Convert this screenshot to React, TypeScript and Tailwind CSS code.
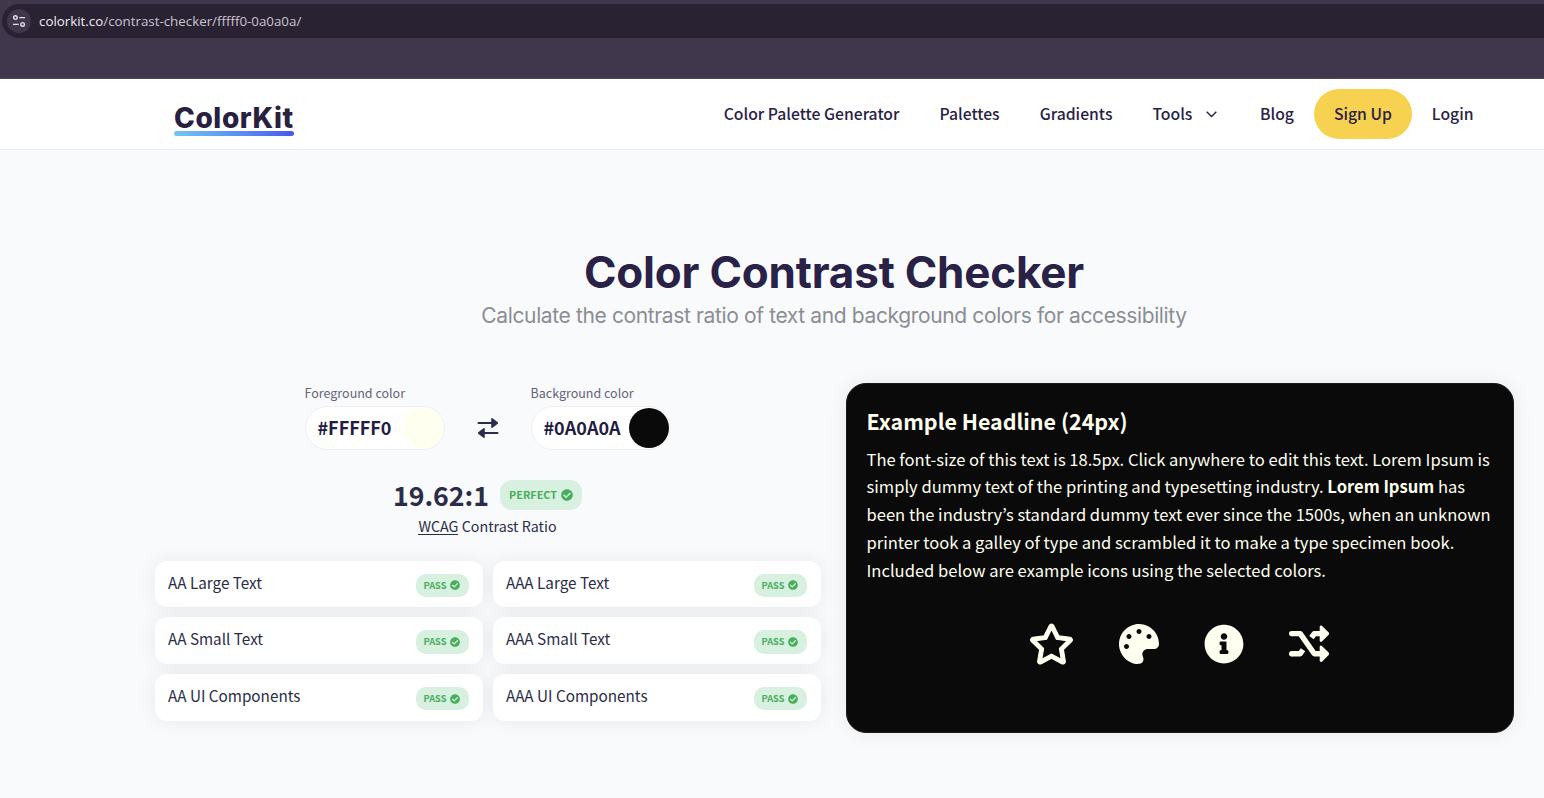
import type { ReactNode } from 'react';
import { FaCheckCircle, FaInfoCircle, FaPalette, FaRegStar } from 'react-icons/fa';

const levels = [
  'AA Large Text',
  'AAA Large Text',
  'AA Small Text',
  'AAA Small Text',
  'AA UI Components',
  'AAA UI Components',
];

function AddressBar() {
  return (
    <div className="h-[79px] bg-[#40374d] pt-1 pl-[2px] border-b border-[#4b4653]">
      <div className="flex h-[34px] items-center rounded-l-full bg-[#292233] pl-[5px]">
        <span className="flex size-6 items-center justify-center rounded-full bg-[#40374d]">
          <svg width="14" height="14" viewBox="0 0 14 14" fill="none" stroke="#e4deea" strokeWidth="1.4">
            <circle cx="3.4" cy="3.6" r="1.8" />
            <path d="M7.3 3.6H13M1 10.4h5.7" />
            <circle cx="10.6" cy="10.4" r="1.8" />
          </svg>
        </span>
        <span className="ml-2 font-['Open_Sans',sans-serif] text-[13.33px] leading-5 text-[#c9c3d0]">
          <span className="text-[#f0ecf4]">colorkit.co</span>/contrast-checker/fffff0-0a0a0a/
        </span>
      </div>
    </div>
  );
}

function NavLink({ children }: { children: ReactNode }) {
  return (
    <a href="#" className="px-5">
      {children}
    </a>
  );
}

function Header() {
  return (
    <header className="flex h-[71px] items-center justify-between border-b border-[#eceef1] bg-white pr-[50.5px] pl-[174px]">
      <a href="#" className="mt-[13px] flex w-[120px] flex-col text-[#28203f]">
        <span className="mt-[-1px] font-[Inter,sans-serif] text-[28px] leading-[26px] font-extrabold tracking-[0.6px] whitespace-nowrap">
          ColorKit
        </span>
        <span className="h-[5px] rounded-full bg-linear-to-r from-[#76c5f0] to-[#4a57f2]" />
      </a>
      <nav className="flex items-center text-[15.72px] leading-6 font-medium whitespace-nowrap text-[#292146]">
        <NavLink>Color Palette Generator</NavLink>
        <NavLink>Palettes</NavLink>
        <NavLink>Gradients</NavLink>
        <a href="#" className="flex items-center pr-[42.6px] pl-5">
          Tools
          <svg className="ml-[14px]" width="11" height="7" viewBox="0 0 11 7" fill="none" stroke="currentColor" strokeWidth="1.4">
            <path d="M.7.8 5.5 5.6 10.3.8" />
          </svg>
        </a>
        <a href="#" className="pr-5">
          Blog
        </a>
        <a href="#" className="rounded-[25px] bg-[#f7d250] px-5 py-[13px]">
          Sign Up
        </a>
        <NavLink>Login</NavLink>
      </nav>
    </header>
  );
}

function ColorField({ label, value, swatch }: { label: string; value: string; swatch: string }) {
  return (
    <label className="flex w-[140px] flex-col">
      <span className="text-[12.5px] leading-5 whitespace-nowrap text-[#666378]">{label}</span>
      <span className="mt-[3px] flex h-11 items-center justify-between rounded-full border border-[#eeeff1] bg-white pr-px pl-3 text-lg leading-6 font-bold text-[#241c41]">
        <span className="mb-[2px]">{value}</span>
        <span className={`size-10 rounded-full ${swatch}`} />
      </span>
    </label>
  );
}

function Level({ name }: { name: string }) {
  return (
    <div className="flex h-[46.67px] items-start justify-between rounded-xl bg-white pr-[14px] pl-[13px] shadow-[0_0_20px_rgba(0,0,0,0.07)]">
      <span className="pt-[9px] text-[15.27px] leading-6 text-[#2b2d48]">{name}</span>
      <span className="mt-[13px] flex h-[23.5px] w-[53px] items-center justify-center gap-1 rounded-[10px] bg-[#d7f0df] pr-px text-[9.2px] leading-none font-bold text-[#48ae5c]">
        PASS
        <FaCheckCircle size={10} />
      </span>
    </div>
  );
}

function Checker() {
  return (
    <section className="flex w-[666px] flex-col items-center">
      <div className="flex items-end gap-8 pr-px">
        <ColorField label="Foreground color" value="#FFFFF0" swatch="bg-[#fffff0]" />
        <svg className="mb-[11px]" width="22" height="22" viewBox="0 0 22 22" fill="#2b2d48" stroke="#2b2d48">
          <path d="M1.5 6h14M20.5 16H7" strokeWidth="2" strokeLinecap="round" fill="none" />
          <path d="M15 1.8v8.4L20.3 6zM7 11.8v8.4L1.7 16z" strokeWidth="1.6" strokeLinejoin="round" />
        </svg>
        <ColorField label="Background color" value="#0A0A0A" swatch="bg-[#0a0a0a]" />
      </div>
      <div className="mt-[30px] flex h-[30px] gap-[11px] pr-px">
        <span className="mt-[-1px] text-[26.7px] leading-[32px] font-bold text-[#2b2d48]">19.62:1</span>
        <span className="flex h-[30px] w-[82px] items-center justify-center gap-1 rounded-xl bg-[#d7f0df] text-[10.8px] leading-none font-bold text-[#48ae5c]">
          <span className="mt-[-1px]">PERFECT</span>
          <FaCheckCircle size={12} />
        </span>
      </div>
      <p className="mt-1 pr-px text-[14.3px] leading-6 text-[#2b2d48]">
        <a href="#" className="inline-block border-b border-[#2b2d48] leading-[17px]">
          WCAG
        </a>{' '}
        Contrast Ratio
      </p>
      <div className="mt-[22.6px] grid w-full grid-cols-2 gap-[10px]">
        {levels.map((name) => (
          <Level key={name} name={name} />
        ))}
      </div>
    </section>
  );
}

function ShuffleIcon() {
  return (
    <svg className="size-10" viewBox="0 0 40 40" fill="none" stroke="currentColor" strokeWidth="5.4" strokeLinejoin="round">
      <path d="M2.7 9.6H11.2L25.3 29.8H33" />
      <path d="M2.7 29.8H11.2L14 25.8M22.5 13.6L25.3 9.6H33" />
      <g fill="currentColor" stroke="none">
        <circle cx="2.7" cy="9.6" r="2.7" />
        <circle cx="2.7" cy="29.8" r="2.7" />
      </g>
      <path d="M32 2.7 39 9.6 32 16.5zM32 22.9 39 29.8 32 36.7z" fill="currentColor" strokeWidth="2.6" />
    </svg>
  );
}

function Preview() {
  return (
    <section className="h-[350px] w-[668px] rounded-[20px] border border-[#1b1b1b] bg-[#0a0a0a] px-[19.5px] pt-[18px] text-[#fffff0] shadow-[0_0_20px_rgba(0,0,0,0.07)]">
      <h2 className="text-[21.45px] leading-[38px] font-bold">Example Headline (24px)</h2>
      <p className="mt-[5.6px] text-[16.57px] leading-[27.75px]">
        The font-size of this text is 18.5px. Click anywhere to edit this text. Lorem Ipsum is simply dummy text of the
        printing and typesetting industry. <b>Lorem Ipsum</b> has been the industry’s standard dummy text ever since
        the 1500s, when an unknown printer took a galley of type and scrambled it to make a type specimen book.
        Included below are example icons using the selected colors.
      </p>
      <div className="mt-[39.4px] flex justify-center gap-[45px] pr-[2px]">
        <FaRegStar className="h-10 w-[45px] overflow-visible" stroke="currentColor" strokeWidth={14} />
        <FaPalette className="size-10" />
        <FaInfoCircle className="size-10" />
        <ShuffleIcon />
      </div>
    </section>
  );
}

export default function App() {
  return (
    <div className="h-[798px] w-[1544px] overflow-hidden bg-[#f9fafc] font-['Noto_Sans_CJK_KR',sans-serif]">
      <AddressBar />
      <Header />
      <main className="pr-[30px] pl-[155px]">
        <div className="pt-[95px] pr-px text-center font-[Inter,sans-serif]">
          <h1 className="text-[44px] leading-[54px] font-bold tracking-[-0.2px] text-[#292146]">
            Color Contrast Checker
          </h1>
          <p className="mt-[2px] text-[21px] leading-[30px] tracking-[-0.37px] text-[#8b8d94]">
            Calculate the contrast ratio of text and background colors for accessibility
          </p>
        </div>
        <div className="mt-[52px] flex gap-[25px]">
          <Checker />
          <Preview />
        </div>
      </main>
    </div>
  );
}
